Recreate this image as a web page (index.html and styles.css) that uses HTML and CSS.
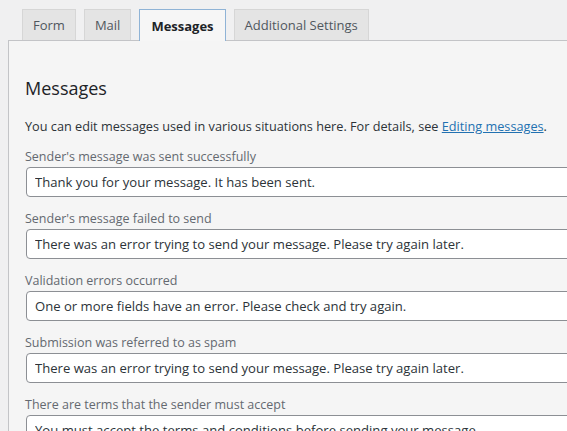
FILE: index.html
```html
<!DOCTYPE html>
<html>
<head>
<meta charset="utf-8">
<link rel="stylesheet" href="styles.css">
</head>
<body>
<div class="wrap">
  <nav class="tabs">
    <span class="tab">Form</span>
    <span class="tab">Mail</span>
    <span class="tab active">Messages</span>
    <span class="tab">Additional Settings</span>
  </nav>
  <section class="panel">
    <h2 class="title">Messages</h2>
    <p class="desc">You can edit messages used in various situations here. For details, see <a href="#">Editing messages</a>.</p>
    <div class="field">
      <label class="label">Sender's message was sent successfully</label>
      <input class="input" type="text" value="Thank you for your message. It has been sent.">
    </div>
    <div class="field">
      <label class="label">Sender's message failed to send</label>
      <input class="input" type="text" value="There was an error trying to send your message. Please try again later.">
    </div>
    <div class="field">
      <label class="label">Validation errors occurred</label>
      <input class="input" type="text" value="One or more fields have an error. Please check and try again.">
    </div>
    <div class="field">
      <label class="label">Submission was referred to as spam</label>
      <input class="input" type="text" value="There was an error trying to send your message. Please try again later.">
    </div>
    <div class="field">
      <label class="label">There are terms that the sender must accept</label>
      <input class="input" type="text" value="You must accept the terms and conditions before sending your message.">
    </div>
  </section>
</div>
</body>
</html>
```
FILE: styles.css
```css
html, body {
  margin: 0;
  padding: 0;
  background: #f0f0f1;
  overflow: hidden;
}
body {
  font-family: "Open Sans", "Noto Sans", sans-serif;
  font-size: 13px;
  color: #3c434a;
}
.wrap {
  padding: 9px 0 0 8px;
}
.tabs {
  display: flex;
  gap: 8px;
  padding-left: 14px;
  height: 31px;
}
.tab {
  box-sizing: border-box;
  height: 31px;
  padding: 0 10px;
  display: flex;
  align-items: center;
  background: #e4e4e4;
  border: 1px solid #d6d6d6;
  border-bottom: none;
  color: #50575e;
  font-size: 13px;
}
.tab.active {
  background: #f6f6f6;
  border: 1px solid #8fb3d6;
  border-bottom: none;
  color: #1d2327;
  font-weight: 700;
  height: 32px;
  padding: 0 11px;
  position: relative;
  z-index: 1;
}
.panel {
  background: #f5f5f5;
  border-top: 1px solid #c3c4c7;
  border-left: 1px solid #c3c4c7;
  padding: 30px 0 0 16px;
  min-height: 420px;
  width: 700px;
}
.title {
  margin: 0;
  font-size: 18px;
  font-weight: 400;
  color: #1d2327;
  line-height: 34px;
}
.desc {
  margin: 11px 0 11px;
  line-height: 20px;
  font-size: 12.7px;
  color: #2c3338;
}
.desc a {
  color: #2271b1;
}
.field {
  display: flex;
  flex-direction: column;
  margin-bottom: 12px;
}
.label {
  line-height: 20px;
  font-size: 12.5px;
  color: #646970;
}
.input {
  box-sizing: border-box;
  height: 30px;
  width: 640px;
  margin-left: 1px;
  border: 1px solid #8c8f94;
  border-radius: 4px;
  background: #fff;
  padding: 0 8px;
  font-family: inherit;
  font-size: 13.1px;
  color: #2c3338;
}
```
